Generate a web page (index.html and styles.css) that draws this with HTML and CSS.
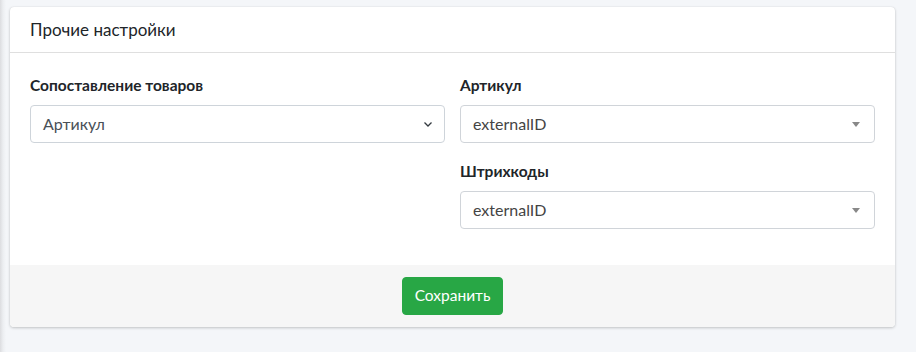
FILE: index.html
```html
<!DOCTYPE html>
<html lang="ru">
<head>
    <meta charset="UTF-8">
    <meta name="viewport" content="width=device-width, initial-scale=1.0">
    <title>Прочие настройки</title>
    <link rel="stylesheet" href="styles.css">
</head>
<body>
    <div class="wrapper">
        <div class="card">
            <div class="card-header">
                <h3 class="card-title">Прочие настройки</h3>
            </div>
            <form class="settings-form">
                <div class="card-body">
                    <div class="row">
                        <div class="col">
                            <div class="form-group">
                                <label for="mapping">Сопоставление товаров</label>
                                <div class="custom-select">
                                    <span>Артикул</span>
                                    <svg class="chevron" width="8" height="5" viewBox="0 0 8 5"><path d="M0.5 0.5 L4 4 L7.5 0.5" fill="none" stroke="#343a40" stroke-width="1.3"/></svg>
                                </div>
                            </div>
                        </div>
                        <div class="col">
                            <div class="form-group">
                                <label>Артикул</label>
                                <div class="select2">
                                    <span>externalID</span>
                                    <b class="arrow"></b>
                                </div>
                            </div>
                            <div class="form-group">
                                <label>Штрихкоды</label>
                                <div class="select2">
                                    <span>externalID</span>
                                    <b class="arrow"></b>
                                </div>
                            </div>
                        </div>
                    </div>
                </div>
                <div class="card-footer">
                    <button type="submit" class="btn-success">Сохранить</button>
                </div>
            </form>
        </div>
    </div>
</body>
</html>
```

FILE: styles.css
```css
body {
    margin: 0;
    font-family: Lato, "Noto Sans", sans-serif;
    font-size: 16px;
    line-height: 1.5;
    color: #212529;
    background: #f4f6f9;
    height: 352px;
    overflow: hidden;
}

.wrapper {
    padding: 7px 21px 0 10px;
    background: linear-gradient(to right, #dcdde0 0, #eceef1 3px, #f4f6f9 6px);
    height: 100%;
    box-sizing: border-box;
}

.card {
    background: #fff;
    border-radius: 4px;
    box-shadow: 0 0 1px rgba(0,0,0,0.125), 0 1px 3px rgba(0,0,0,0.2);
}

.card-header {
    padding: 12px 20px;
    border-bottom: 1px solid rgba(0,0,0,0.125);
}

.card-title {
    margin: 0;
    font-size: 17px;
    font-weight: 400;
    line-height: 21px;
}

.card-body {
    padding: 20px 20px 20px;
}

.row {
    display: flex;
    gap: 15px;
}

.col {
    flex: 1;
}

.form-group {
    margin-bottom: 16px;
}

label {
    display: block;
    font-size: 15.5px;
    font-weight: 700;
    line-height: 24px;
    margin-bottom: 8px;
}

.custom-select,
.select2 {
    height: 38px;
    box-sizing: border-box;
    border: 1px solid #ced4da;
    border-radius: 4px;
    display: flex;
    align-items: center;
    justify-content: space-between;
    padding: 0 12px;
    color: #495057;
}

.select2 {
    border-color: #d0d4d9;
    color: #444;
    padding: 0 14px 0 12px;
}

.arrow {
    width: 0;
    height: 0;
    border-left: 4px solid transparent;
    border-right: 4px solid transparent;
    border-top: 5px solid #888;
}

.card-footer {
    background: #f6f6f6;
    padding: 12px 20px;
    text-align: center;
    border-radius: 0 0 4px 4px;
}

.btn-success {
    font-family: inherit;
    font-size: 15.5px;
    line-height: 1.5;
    height: 38px;
    padding: 6px 12px;
    color: #fff;
    background: #28a745;
    border: 1px solid #28a745;
    border-radius: 4px;
    cursor: pointer;
}
```
